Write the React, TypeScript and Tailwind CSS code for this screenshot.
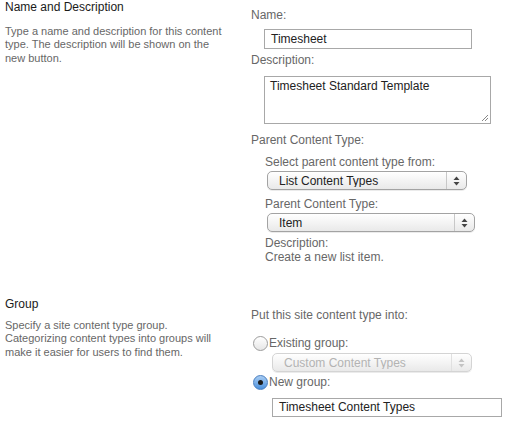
const font = { fontFamily: "Tahoma, 'Liberation Sans', Arial, sans-serif" };

const SelectBox = ({ value, width, disabled }: { value: string; width: string; disabled?: boolean }) => (
  <div
    className={`flex items-center h-[19px] ${width} rounded-[5px] border ${
      disabled ? "border-[#d4d4d4] text-[#b3b3b3]" : "border-[#a3a3a3] text-[#222]"
    } bg-gradient-to-b from-[#ffffff] to-[#e9e9e9] shadow-[0_1px_0_rgba(0,0,0,0.08)]`}
  >
    <span className="flex-1 pl-[11px] text-[12px] leading-none truncate">{value}</span>
    <div className={`flex flex-col items-center justify-center w-[20px] h-full border-l ${disabled ? "border-[#e0e0e0]" : "border-[#c8c8c8]"}`}>
      <svg width="7" height="10" viewBox="0 0 7 10">
        <path d="M3.5 0.5 L6.5 4 L0.5 4 Z" fill={disabled ? "#c4c4c4" : "#444"} />
        <path d="M3.5 9.5 L6.5 6 L0.5 6 Z" fill={disabled ? "#c4c4c4" : "#444"} />
      </svg>
    </div>
  </div>
);

const Radio = ({ checked }: { checked?: boolean }) => (
  <div
    className={`flex items-center justify-center w-[15px] h-[15px] rounded-full border ${
      checked
        ? "border-[#4a7fc0] bg-gradient-to-b from-[#a9cdf3] to-[#4b91dc]"
        : "border-[#9c9c9c] bg-gradient-to-b from-[#ffffff] to-[#e6e6e6]"
    }`}
  >
    {checked && <div className="w-[5px] h-[5px] rounded-full bg-[#1b1b1b]" />}
  </div>
);

export default function App() {
  return (
    <div className="w-[510px] h-[437px] bg-white text-[#676767] overflow-hidden" style={font}>
      {/* Name and Description */}
      <div className="flex h-[290px]">
        <div className="w-[250px] pl-[5px]">
          <h3 className="text-[12px] leading-[15px] text-[#1a1a1a] font-normal">Name and Description</h3>
          <p className="mt-[10px] text-[11px] leading-[13.3px] whitespace-nowrap">
            Type a name and description for this content
            <br />
            type. The description will be shown on the
            <br />
            new button.
          </p>
        </div>
        <div className="flex-1 text-[12px] leading-[13px]">
          <div className="mt-[9px] pl-[1px]">Name:</div>
          <div className="mt-[7px] ml-[14px] w-[208px] h-[20px] border border-[#a8a8a8] flex items-center px-[6px] text-[#222]">
            Timesheet
          </div>
          <div className="mt-[5px] pl-[1px]">Description:</div>
          <div className="relative mt-[9px] ml-[14px] w-[227px] h-[48px] border border-[#a8a8a8] px-[5px] pt-[3px] text-[#222]">
            Timesheet Standard Template
            <svg className="absolute right-[1px] bottom-[1px]" width="8" height="8" viewBox="0 0 8 8">
              <path d="M7 1 L1 7 M7 4 L4 7" stroke="#888" strokeWidth="1" />
            </svg>
          </div>
          <div className="mt-[10px] pl-[1px]">Parent Content Type:</div>
          <div className="ml-[15px]">
            <div className="mt-[9px]">Select parent content type from:</div>
            <div className="mt-[2px] ml-[2px]">
              <SelectBox value="List Content Types" width="w-[200px]" />
            </div>
            <div className="mt-[8px]">Parent Content Type:</div>
            <div className="mt-[2px] ml-[2px]">
              <SelectBox value="Item" width="w-[208px]" />
            </div>
            <div className="mt-[5px]">Description:</div>
            <div className="mt-[1px]">Create a new list item.</div>
          </div>
        </div>
      </div>

      {/* Group */}
      <div className="flex">
        <div className="w-[250px] pl-[5px]">
          <h3 className="mt-[7px] text-[12px] leading-[15px] text-[#1a1a1a] font-normal">Group</h3>
          <p className="mt-[7px] text-[11px] leading-[13.3px] whitespace-nowrap">
            Specify a site content type group.
            <br />
            Categorizing content types into groups will
            <br />
            make it easier for users to find them.
          </p>
        </div>
        <div className="flex-1 text-[12px] leading-[13px]">
          <div className="mt-[19px] pl-[1px]">Put this site content type into:</div>
          <div className="mt-[14px] flex items-center gap-[1px] pl-[3px]">
            <Radio />
            <span>Existing group:</span>
          </div>
          <div className="mt-[2px] ml-[22px]">
            <SelectBox value="Custom Content Types" width="w-[200px]" disabled />
          </div>
          <div className="mt-[3px] flex items-center gap-[1px] pl-[3px]">
            <Radio checked />
            <span>New group:</span>
          </div>
          <div className="mt-[8px] ml-[22px] w-[230px] h-[19px] border border-[#a8a8a8] flex items-center px-[6px] text-[#222]">
            Timesheet Content Types
          </div>
        </div>
      </div>
    </div>
  );
}
